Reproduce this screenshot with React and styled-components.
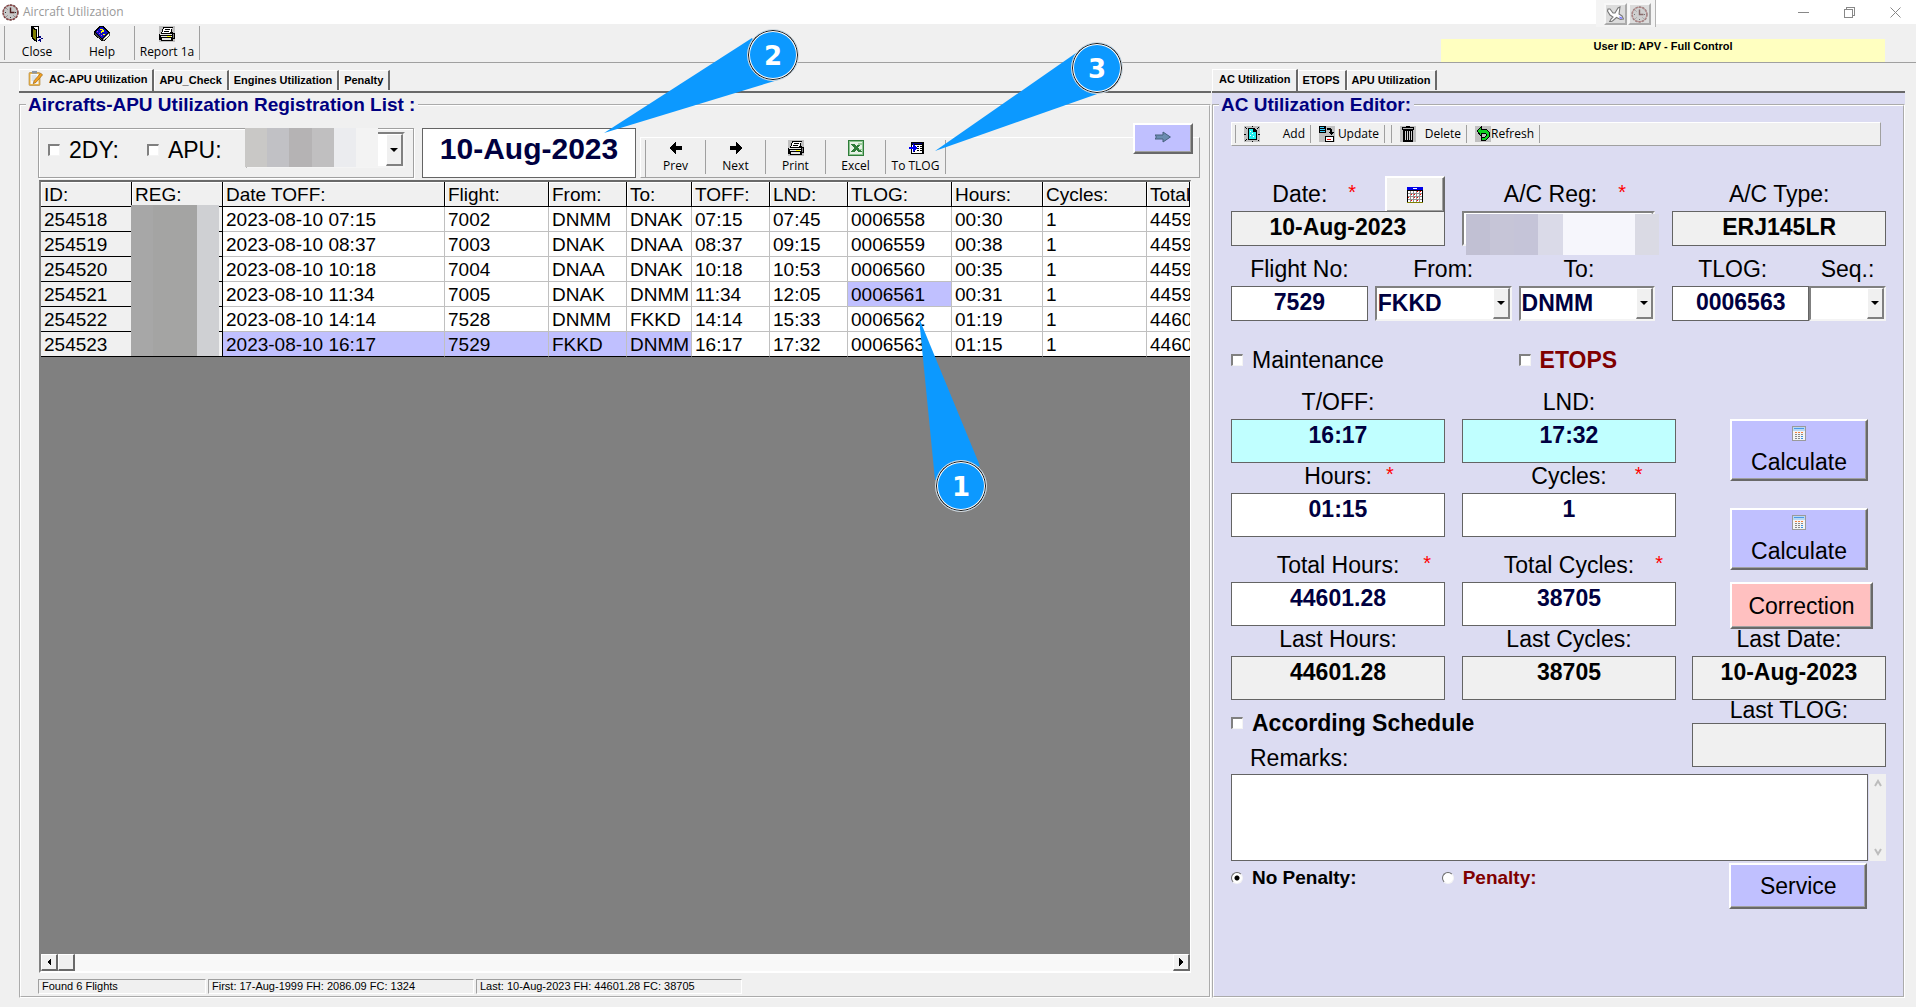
import React from "react";
import styled, { createGlobalStyle, css } from "styled-components";

const ARIAL = `"Liberation Sans", Arial, sans-serif`;
const UI = `"Open Sans", "Noto Sans", sans-serif`;

const GlobalStyle = createGlobalStyle`
  *, *::before, *::after { box-sizing: border-box; }
  body { margin: 0; background: #f0f0f0; color: #000; font-family: ${ARIAL}; }
  button, input, select, textarea { font: inherit; color: inherit; margin: 0; border-radius: 0; }
`;

const raised = css`
  border: 2px solid;
  border-color: #fff #696969 #696969 #fff;
  box-shadow: inset -1px -1px 0 #a0a0a0;
`;

const Shell = styled.div`
  position: relative;
  min-height: 100vh;
  display: flex;
  flex-direction: column;
  overflow: hidden;
`;

/* ---------- title bar ---------- */
const TitleBar = styled.header`
  height: 24px;
  display: flex;
  align-items: center;
  gap: 4px;
  padding-left: 2px;
  background: #fff;
  font: 12px/16px ${UI};
  color: #999;
`;
const Title = styled.h1`
  flex: 1;
  margin: 0;
  font: inherit;
`;
const WindowButtons = styled.div`
  display: flex;
  gap: 22px;
  padding-right: 9px;
`;
const WindowButton = styled.button`
  width: 24px;
  height: 20px;
  padding: 0;
  border: 0;
  background: none;
  display: grid;
  place-items: center;
`;
const FloatBar = styled.div`
  position: absolute;
  top: 0;
  right: 260px;
  width: 60px;
  height: 27px;
  display: flex;
  gap: 1px;
  padding: 3px 0 0 8px;
  background: #f4f4f4;
  border-right: 1px solid #b4b4b4;
`;
const FloatButton = styled.button`
  width: 23px;
  height: 22px;
  padding: 0;
  display: grid;
  place-items: center;
  background: #dcdcdc;
  border: 2px solid;
  border-color: #f8f8f8 #aaa #aaa #f8f8f8;
`;

/* ---------- main toolbar ---------- */
const TopBar = styled.div`
  height: 39px;
  display: flex;
  align-items: flex-start;
  justify-content: space-between;
  padding: 2px 31px 0 4px;
  border-bottom: 1px solid #a0a0a0;
`;
const Tools = styled.div`
  display: flex;
  border-left: 1px solid #a0a0a0;
`;
const ToolButton = styled.button`
  width: ${(p) => p.$w}px;
  height: 34px;
  padding: 0;
  display: flex;
  flex-direction: column;
  align-items: center;
  gap: 2px;
  background: none;
  border: 0;
  border-right: 1px solid #a0a0a0;
  font: 12px/16px ${UI};
  white-space: nowrap;
`;
const UserBadge = styled.div`
  width: 444px;
  height: 23px;
  margin-top: 13px;
  background: #ffffc0;
  font: bold 11px/14px ${ARIAL};
  text-align: center;
`;

/* ---------- pages ---------- */
const Pages = styled.main`
  flex: 1;
  display: grid;
  grid-template-columns: minmax(0, 1192fr) minmax(0, 693fr);
  gap: 1px;
  padding: 0 11px 9px 19px;
`;
const Page = styled.section`
  display: flex;
  flex-direction: column;
  min-width: 0;
`;
const TabStrip = styled.nav`
  height: 30px;
  display: flex;
  align-items: flex-end;
  border-bottom: 2px solid #696969;
`;
const Tab = styled.button`
  height: ${(p) => (p.$active ? 22 : 20)}px;
  margin-bottom: ${(p) => (p.$active ? 0 : 1)}px;
  padding: 0 5px ${(p) => (p.$active ? 4 : 2)}px ${(p) => p.$left || 4}px;
  display: flex;
  align-items: center;
  gap: 6px;
  background: #f0f0f0;
  border: solid;
  border-width: 1px 2px 0 1px;
  border-color: #fff #696969 #fff #fff;
  font: bold 11px/14px ${ARIAL};
  white-space: nowrap;
`;
const Group = styled.fieldset`
  flex: 1;
  min-width: 0;
  margin: 0;
  padding: ${(p) => p.$pad};
  display: flex;
  flex-direction: column;
  border: 2px groove #fff;
`;
const EditorBack = styled.div`
  flex: 1;
  display: flex;
  background: #dcdcf2;
`;
const Legend = styled.legend`
  margin-left: ${(p) => p.$left}px;
  padding: 0 3px 0 2px;
  font: bold 19px/24px ${ARIAL};
  color: #000080;
`;

/* ---------- list page ---------- */
const FilterRow = styled.div`
  position: relative;
  display: flex;
  align-items: flex-end;
  margin: 0 9px 2px 17px;
  height: 50px;
`;
const FilterBox = styled.div`
  width: 376px;
  height: 50px;
  display: flex;
  align-items: center;
  padding: 0 8px 6px 9px;
  border: 1px solid #a0a0a0;
  box-shadow: inset 1px 1px 0 #fff, 1px 1px 0 #fff;
`;
const Check = styled.label`
  display: flex;
  align-items: center;
  gap: 9px;
  margin-right: ${(p) => p.$mr || 0}px;
  font: ${(p) => (p.$bold ? "bold" : "normal")} ${(p) => p.$size || 23}px/26px ${ARIAL};
  color: ${(p) => p.$color || "#000"};
  white-space: nowrap;
`;
const Tick = styled.input`
  appearance: none;
  width: 12px;
  height: 12px;
  flex: none;
  background: #fff;
  border: solid;
  border-width: 2px 1px 1px 2px;
  border-color: #808080 #f4f4f4 #f4f4f4 #808080;
`;
const Dot = styled.input`
  appearance: none;
  width: 12px;
  height: 12px;
  flex: none;
  border-radius: 50%;
  border: 1px solid;
  border-color: #696969 #f4f4f4 #f4f4f4 #696969;
  background: #fff;
  &:checked { background: radial-gradient(circle, #000 2px, #fff 3px); }
`;
const Combo = styled.div`
  position: relative;
  display: flex;
  height: ${(p) => p.$h || 36}px;
  width: ${(p) => p.$w || "100%"};
  margin-left: ${(p) => (p.$push ? "auto" : 0)};
  background: #fff;
  border: 2px solid;
  border-color: #808080 #f4f4f4 #f4f4f4 #808080;
`;
const ComboSelect = styled.select`
  appearance: none;
  flex: 1;
  min-width: 0;
  padding: 0 0 2px 1px;
  border: 0;
  background: transparent;
  font: bold 23px/26px ${ARIAL};
  color: #000040;
`;
const ComboArrow = styled.span`
  width: 17px;
  display: grid;
  place-items: center;
  background: #f0f0f0;
  border: solid;
  border-width: 1px 2px 2px 1px;
  border-color: #fff #808080 #808080 #fff;
  pointer-events: none;
  &::after {
    content: "";
    border: 4px solid transparent;
    border-top-color: #000;
    border-bottom: 0;
  }
`;
const Mosaic = styled.div`
  position: absolute;
  top: ${(p) => p.$top}px;
  left: ${(p) => p.$left}px;
  width: ${(p) => p.$w}px;
  height: ${(p) => p.$h}px;
  display: flex;
`;
const Tile = styled.span`
  flex: ${(p) => p.$n || 1};
  background: ${(p) => p.$c};
`;
const DateBig = styled.input`
  width: 214px;
  height: 50px;
  margin: 0 4px 0 8px;
  padding: 0 0 8px;
  border: 1px solid #646464;
  background: #fff;
  font: bold 30px/36px ${ARIAL};
  color: #000040;
  text-align: center;
`;
const Strip = styled.div`
  flex: 1;
  height: 41px;
  padding: 2px 0 0 4px;
  display: flex;
  border: 1px solid;
  border-color: #fff #a0a0a0 #a0a0a0 #fff;
`;
const GoButton = styled.button`
  ${raised}
  position: absolute;
  right: 7px;
  bottom: 24px;
  width: 60px;
  height: 31px;
  padding: 0 0 4px;
  background: #c0c0ff;
  display: grid;
  place-items: center;
`;
const GridFrame = styled.div`
  position: relative;
  flex: 1;
  margin: 0 18px 6px 18px;
  display: flex;
  flex-direction: column;
  background: #808080;
  border: solid;
  border-width: 2px 1px 2px 2px;
  border-color: #696969 #fff #fff #808080;
  overflow: hidden;
`;
const GridBody = styled.div`
  flex: 1;
`;
const Flights = styled.table`
  width: 100%;
  table-layout: fixed;
  border-collapse: separate;
  border-spacing: 0;
  font: 19px/22px ${ARIAL};
`;
const Head = styled.th`
  height: 25px;
  padding: 2px 0 0 3px;
  font-weight: normal;
  text-align: left;
  background: #f0f0f0;
  border: solid #000;
  border-width: 0 1px 1px 0;
  box-shadow: inset 1px 1px 0 #fff;
  overflow: hidden;
  white-space: nowrap;
`;
const Cell = styled.td`
  height: 25px;
  padding: 2px 0 0 3px;
  overflow: hidden;
  white-space: nowrap;
  background: ${(p) => (p.$fixed ? "#f0f0f0" : p.$hot ? "#c0c0ff" : "#fff")};
  border: solid;
  border-color: ${(p) => (p.$fixed ? "#000" : "#c0c0c0")};
  border-width: 0 ${(p) => (p.$open ? 0 : 1)}px 1px 0;
  ${(p) => p.$last && "border-bottom-color: #000;"}
`;
const HScroll = styled.div`
  height: 17px;
  display: flex;
  background: #f8f8f8;
`;
const ScrollButton = styled.button`
  width: 17px;
  padding: 0;
  display: grid;
  place-items: center;
  background: #f0f0f0;
  border: solid;
  border-width: 1px 2px 2px 1px;
  border-color: #fff #696969 #696969 #fff;
  margin-left: ${(p) => (p.$end ? "auto" : 0)};
`;
const StatusBar = styled.footer`
  display: flex;
  gap: 2px;
  margin: 0 0 2px 17px;
`;
const Status = styled.div`
  width: ${(p) => p.$w}px;
  height: 15px;
  padding-left: 3px;
  border: 1px solid;
  border-color: #a0a0a0 #fff #fff #a0a0a0;
  font: 11px/13px ${ARIAL};
`;

/* ---------- editor page ---------- */
const EditorBar = styled.div`
  height: 24px;
  margin-right: 5px;
  margin-bottom: 30px;
  padding: 2px 0 2px 3px;
  display: flex;
  background: #f0f0f0;
  border: 1px solid;
  border-color: #fff #a0a0a0 #a0a0a0 #fff;
`;
const EditorButton = styled.button`
  width: ${(p) => p.$w}px;
  padding: 0 5px 0 8px;
  display: flex;
  align-items: center;
  justify-content: space-between;
  background: none;
  border: 0;
  border-left: 1px solid #a0a0a0;
  font: 12px/16px ${UI};
`;
const BarEnd = styled.span`
  border-left: 1px solid #a0a0a0;
  width: 7px;
`;
const Row = styled.div`
  display: grid;
  grid-template-columns: ${(p) => p.$cols};
  column-gap: ${(p) => p.$gap}px;
  margin-bottom: ${(p) => p.$mb || 0}px;
`;
const Field = styled.div`
  display: flex;
  flex-direction: column;
  min-width: 0;
`;
const FieldHead = styled.div`
  height: ${(p) => p.$h || 30}px;
  padding-right: ${(p) => (p.$lean ? 16 : 0)}px;
  display: flex;
  align-items: flex-end;
  gap: 16px;
`;
const Caption = styled.label`
  flex: 1;
  display: grid;
  grid-template-columns: 1fr auto 1fr;
  margin-bottom: ${(p) => (p.$tight ? 0 : 4)}px;
  font: 23px/26px ${ARIAL};
  white-space: nowrap;
  &::before { content: ""; }
`;
const Star = styled.span`
  padding-left: ${(p) => p.$gap}px;
  font: 20px/22px ${ARIAL};
  color: #f00;
`;
const Box = styled.input`
  width: 100%;
  height: ${(p) => (p.$tall ? 44 : 35)}px;
  padding: 0 0 ${(p) => (p.$tall ? 12 : 2)}px;
  border: 1px solid #646464;
  background: ${(p) => p.$bg || "#fff"};
  font: bold 23px/26px ${ARIAL};
  color: ${(p) => (p.readOnly ? "#000" : "#000040")};
  text-align: center;
`;
const CalendarButton = styled.button`
  ${raised}
  width: 60px;
  height: 35px;
  padding: 0;
  border-bottom: 0;
  background: #f0f0f0;
  display: grid;
  place-items: center;
`;
const TlogPair = styled.div`
  display: grid;
  grid-template-columns: 137fr 77fr;
  margin-left: 10px;
`;
const Actions = styled.div`
  display: flex;
  flex-direction: column;
  padding-top: 30px;
`;
const Action = styled.button`
  ${raised}
  width: ${(p) => p.$w || 138}px;
  height: ${(p) => p.$h}px;
  margin: 0 0 ${(p) => p.$mb || 0}px ${(p) => p.$ml || 0}px;
  padding: 0;
  display: flex;
  flex-direction: column;
  align-items: center;
  justify-content: center;
  gap: 8px;
  background: ${(p) => p.$bg || "#c0c0ff"};
  font: 23px/26px ${ARIAL};
`;
const RemarksLabel = styled.label`
  display: block;
  margin: 9px 0 3px 19px;
  font: 23px/26px ${ARIAL};
`;
const Memo = styled.div`
  display: flex;
  gap: 1px;
`;
const MemoText = styled.textarea`
  flex: 1;
  height: 87px;
  resize: none;
  overflow: hidden;
  border: 1px solid #646464;
  background: #fff;
`;
const MemoScroll = styled.div`
  width: 17px;
  padding: 5px 0;
  display: flex;
  flex-direction: column;
  align-items: center;
  justify-content: space-between;
  background: #f0f0f0;
`;
const Bottom = styled.div`
  display: grid;
  grid-template-columns: 211fr 288fr 157fr;
  align-items: start;
  padding-top: 2px;
  ${Check} { padding-top: 2px; }
`;

/* ---------- callouts ---------- */
const Tail = styled.svg`
  position: absolute;
  top: 0;
  left: 0;
  width: 1150px;
  height: 560px;
  pointer-events: none;
`;
const Bubble = styled.div`
  position: absolute;
  left: ${(p) => p.$x}px;
  top: ${(p) => p.$y}px;
  width: 52px;
  height: 52px;
  border: 1px solid #ddd;
  border-radius: 50%;
  background: #0c99ff;
  box-shadow: inset 0 0 0 1px #111, inset 0 0 0 2px #fff;
  color: #fff;
  font: bold 26px/52px "DejaVu Sans", Verdana, sans-serif;
  text-align: center;
`;

/* ---------- icons ---------- */
const Svg = ({ w = 16, h = 16, children }) => (
  <svg width={w} height={h} viewBox={`0 0 ${w} ${h}`} shapeRendering="crispEdges" aria-hidden="true">
    {children}
  </svg>
);
const ClockIcon = ({ pale }) => (
  <svg width="17" height="17" viewBox="0 0 17 17" aria-hidden="true" opacity={pale ? 0.6 : 1}>
    <circle cx="8.5" cy="8.5" r="7.4" fill="#c8c8c8" stroke="#5a4444" strokeWidth="1.6" strokeDasharray="2.4 1" />
    <circle cx="8.5" cy="8.5" r="7.4" fill="none" stroke="#b05050" strokeWidth=".7" />
    <path d="M8.5 3.5V8.5H12.5" fill="none" stroke="#502020" strokeWidth="1.4" />
    <path d="M3 8.5h1M8.5 13v1M13 8.5h1M4.6 4.6l.7.7M4.6 12.4l.7-.7M12.4 12.4l-.7-.7" stroke="#333" />
  </svg>
);
const PlaneIcon = () => (
  <svg width="17" height="16" viewBox="0 0 17 16" aria-hidden="true">
    <path d="M1 3h2l3 4 2 0 3-5 2-1-1 7 3 2 1.500 3-3 .5-4-2-4 3.500-3 1 1.500-3 2-2-3-2-2.500-4z" fill="#fff" stroke="#777" strokeWidth="1.1" />
    <path d="M12 10.500l2.500 .5 1 2-2.500-.5z" fill="#77f" />
  </svg>
);
const DoorIcon = () => (
  <Svg>
    <path d="M2 0h8v12H7V1H3v10H2z" fill="#000" />
    <path d="M3 1l4 3v11l-4-3z" fill="#808000" stroke="#000" strokeWidth="1" />
    <path d="M7 1h2v10H8V4z" fill="#fff" />
    <path d="M10 10h2v2h2v1h-2v3h-1v-2h-1v-1h2v-1h-2zM9 14h3v1H9z" fill="#000080" />
  </Svg>
);
const BookIcon = () => (
  <Svg>
    <path d="M6 0h3l7 6v3l-6 6H8L0 9V5z" fill="#000" />
    <path d="M6 1h2l6 5-6 6-7-6z" fill="#1010c0" />
    <path d="M1 7l7 6v1L1 9z" fill="#404040" />
    <path d="M9 13l6-6v3l-5 4H9z" fill="#fff" stroke="#777" strokeWidth=".6" />
    <path d="M6 3h3v1h1v2H8v1H7V5h1V4H6zM9 8h2v1H9z" fill="#ff0" />
    <path d="M3 5h1v1H3zM5 7h1v1H5zM7 9h1v1H7z" fill="#e040e0" />
  </Svg>
);
const PrinterIcon = () => (
  <Svg>
    <rect width="16" height="16" fill="#c0c0c0" />
    <path d="M4 1h10v1h-1v4h1v1h2v6h-2v2H2v-1H0V8h2V6h1V3h1z" fill="#000" />
    <path d="M5 2h8l-2 5H3z" fill="#fff" />
    <path d="M6 3h5v1H6zM5 5h5v1H5z" fill="#000" />
    <path d="M1 8h12v1H1zM2 10h11v1H2zM3 12h9v2H3z" fill="#e4e4e4" />
    <path d="M8 10h4v1H8z" fill="#ff0" />
    <path d="M14 8h1v4h-1z" fill="#808080" />
  </Svg>
);
const NoteIcon = () => (
  <svg width="15" height="15" viewBox="0 0 15 15" aria-hidden="true">
    <rect x="1" y="1.5" width="11" height="13" rx="1" fill="#e8b44c" stroke="#b08030" strokeWidth=".6" />
    <rect x="2.5" y="3" width="8" height="10" fill="#f6f8fb" />
    <rect x="4" y="0" width="5" height="2.6" fill="#8c96a4" />
    <path d="M3.5 5h5M3.5 7h5M3.5 9h3" stroke="#b8c4d4" strokeWidth=".8" />
    <path d="M12.6 2.2l2 1.6-6.6 7.6-2.8 1.4.8-3z" fill="#f4a020" stroke="#8a5a10" strokeWidth=".6" />
  </svg>
);
const ArrowIcon = ({ flip }) => (
  <Svg>
    <path
      transform={flip ? "matrix(-1 0 0 1 16 0)" : undefined}
      d="M2 6h6V2h1v1h1v1h1v1h1v1h1v1h1v2h-1v1h-1v1h-1v1h-1v1H9v1H8v-4H2z"
      fill="#000"
    />
  </Svg>
);
const GoIcon = () => (
  <svg width="16" height="12" viewBox="0 0 16 12" aria-hidden="true">
    <path d="M0 4h8V1l7.4 5L8 11V8H0l1.4-2z" fill="#6a8cb0" stroke="#46607c" strokeWidth="1" />
  </svg>
);
const ExcelIcon = () => (
  <Svg>
    <rect width="16" height="16" fill="#2f7d3a" />
    <rect x="1" y="1" width="14" height="14" fill="#8cc490" />
    <rect x="2" y="2" width="12" height="12" fill="#e6f2e6" />
    <path d="M3 4h4l1 2 2-2h3l-3 4 4 4h-4l-2-2-2 2H3l3-4z" fill="#2f7d3a" />
    <path d="M10 3h4v2h-4zM11 9h3v1h-3z" fill="#9ccc9c" />
  </Svg>
);
const TlogIcon = () => (
  <Svg>
    <path d="M3 2h13v12H3z" fill="#000" />
    <path d="M4 5h10v8H4z" fill="#fff" />
    <path d="M4 3h10v1H4z" fill="#000080" />
    <path d="M9 6h2v1H9zM12 6h2v1h-2zM9 8h2v1H9zM12 8h2v1h-2zM9 10h2v1H9zM12 10h2v1h-2zM5 11h2v1H5z" fill="#000" />
    <path d="M1 7h4V4h1v1h1v1h1v1h1v2H8v1H7v1H6v1H5V9H1z" fill="#0000f0" />
  </Svg>
);
const AddIcon = () => (
  <Svg>
    <rect width="16" height="16" fill="#c0c0c0" />
    <path d="M4 2h6l3 3v9H4z" fill="#000" />
    <path d="M5 3h4v3h3v7H5z" fill="#20f0f0" />
    <path d="M6 5h1v1H6zM8 7h1v1H8zM6 9h1v1H6zM9 10h1v1H9z" fill="#fff" />
    <path d="M1 1h1v1H1zM2 2h1v1H2zM14 1h1v1h-1zM13 2h1v1h-1zM0 8h2v1H0zM14 8h2v1h-2zM1 14h1v1H1zM2 13h1v1H2zM14 14h1v1h-1zM8 0h1v1H8zM8 15h1v1H8z" fill="#000" />
  </Svg>
);
const UpdateIcon = () => (
  <Svg>
    <rect width="16" height="16" fill="#c0c0c0" />
    <path d="M0 0h6l1 1v6H0z" fill="#000" />
    <path d="M1 1h4v1H1zM1 3h5v1H1zM1 5h5v1H1z" fill="#40d0ff" />
    <path d="M8 2h4v1h1v3h2l-3 3-3-3h2V4H8zM6 10h9v6H6z" fill="#000" />
    <path d="M7 11h7v4H7z" fill="#fff" />
    <path d="M8 13h4v1H8z" fill="#f00" />
  </Svg>
);
const TrashIcon = () => (
  <Svg>
    <rect width="16" height="16" fill="#c0c0c0" />
    <path d="M6 0h4v1h4v3h-1v12H3V4H2V1h4z" fill="#000" />
    <path d="M3 2h10v1H3z" fill="#b0b0b0" />
    <path d="M5 5h1v9H5zM7 5h1v9H7zM9 5h1v9H9zM11 5h1v9h-1z" fill="#d0d0d0" />
  </Svg>
);
const RefreshIcon = () => (
  <Svg>
    <rect width="16" height="16" fill="#c0c0c0" />
    <path d="M2 5l4-4v2h5l3 3v5l-3 3H6v-3h4l1-1V8l-1-1H6v3z" fill="#10d020" stroke="#000" strokeWidth="1" />
  </Svg>
);
const CalendarIcon = () => (
  <Svg>
    <rect width="16" height="16" fill="#000" />
    <rect width="16" height="3" fill="#0000e8" />
    <path d="M6 1h4v1H6z" fill="#fff" />
    <path d="M1 4h14v11H1z" fill="#fff" />
    <path d="M1 6h14v1H1zM1 9h14v1H1zM1 12h14v1H1zM3 4h1v11H3zM6 4h1v11H6zM9 4h1v11H9zM12 4h1v11h-1z" fill="#909090" />
    <path d="M10 4h1v1h-1zM13 4h1v1h-1zM4 7h1v1H4zM13 7h1v1h-1zM7 7h1v1H7zM1 10h1v1H1zM7 10h1v1H7zM10 10h1v1h-1zM4 13h1v1H4zM10 13h1v1h-1z" fill="#f00" />
    <path d="M0 15h16v1H0z" fill="#808000" />
  </Svg>
);
const CalcIcon = () => (
  <Svg w={14} h={15}>
    <rect width="14" height="15" fill="#9a9a9a" />
    <rect x="1" y="1" width="12" height="13" fill="#f4f4f4" />
    <rect x="1" y="1" width="12" height="4" fill="#b8d8f4" />
    <rect x="2" y="2" width="10" height="1" fill="#4a98e8" />
    {[6, 8, 10, 12].map((y) =>
      [3, 6, 9].map((x) => (
        <rect key={`${x}-${y}`} x={x} y={y} width="2" height="1" fill={y === 6 ? "#f08040" : x === 9 && y > 8 ? "#3a90e0" : "#888"} />
      ))
    )}
  </Svg>
);
const ScrollArrow = ({ right }) => (
  <Svg w={4} h={8}>
    <path d={right ? "M0 0l4 4-4 4z" : "M4 0L0 4l4 4z"} fill="#000" />
  </Svg>
);
const Chevron = ({ down }) => (
  <svg width="8" height="8" viewBox="0 0 8 8" aria-hidden="true">
    <path d={down ? "M1 1l3 5 3-5" : "M1 7l3-5 3 5"} fill="none" stroke="#bcbcbc" strokeWidth="2" />
  </svg>
);

/* ---------- data ---------- */
const columns = [
  ["ID:", 91], ["REG:", 91], ["Date TOFF:", 222], ["Flight:", 104], ["From:", 78], ["To:", 65],
  ["TOFF:", 78], ["LND:", 78], ["TLOG:", 104], ["Hours:", 91], ["Cycles:", 104], ["Total", null],
];
const flights = [
  ["254518", "", "2023-08-10 07:15", "7002", "DNMM", "DNAK", "07:15", "07:45", "0006558", "00:30", "1", "4459"],
  ["254519", "", "2023-08-10 08:37", "7003", "DNAK", "DNAA", "08:37", "09:15", "0006559", "00:38", "1", "4459"],
  ["254520", "", "2023-08-10 10:18", "7004", "DNAA", "DNAK", "10:18", "10:53", "0006560", "00:35", "1", "4459"],
  ["254521", "", "2023-08-10 11:34", "7005", "DNAK", "DNMM", "11:34", "12:05", "0006561", "00:31", "1", "4459"],
  ["254522", "", "2023-08-10 14:14", "7528", "DNMM", "FKKD", "14:14", "15:33", "0006562", "01:19", "1", "4460"],
  ["254523", "", "2023-08-10 16:17", "7529", "FKKD", "DNMM", "16:17", "17:32", "0006563", "01:15", "1", "4460"],
];
const isHot = (r, c) => (r === 5 && c >= 2 && c <= 5) || (r === 3 && c === 8);

const TextField = ({ id, label, value, star, tall, readOnly, bg, headH, tight, lean, extra }) => (
  <Field>
    <FieldHead $h={headH} $lean={lean}>
      <Caption htmlFor={id} $tight={tight}>
        <span>{label}</span>
        {star && <Star $gap={star}>*</Star>}
      </Caption>
      {extra}
    </FieldHead>
    <Box id={id} defaultValue={value} $tall={tall} readOnly={readOnly} $bg={readOnly ? "#f0f0f0" : bg} />
  </Field>
);

const ComboField = ({ id, label, value, star, headH, lean, children }) => (
  <Field>
    <FieldHead $h={headH} $lean={lean}>
      <Caption htmlFor={id}>
        <span>{label}</span>
        {star && <Star $gap={star}>*</Star>}
      </Caption>
    </FieldHead>
    <Combo $h={35}>
      <ComboSelect id={id} defaultValue={value}>
        <option value={value}>{value}</option>
      </ComboSelect>
      <ComboArrow />
      {children}
    </Combo>
  </Field>
);

export default function App() {
  return (
    <Shell>
      <GlobalStyle />
      <TitleBar>
        <ClockIcon />
        <Title>Aircraft Utilization</Title>
        <WindowButtons>
          <WindowButton aria-label="Minimize"><Svg w={11} h={11}><path d="M0 5h11v1H0z" fill="#888" /></Svg></WindowButton>
          <WindowButton aria-label="Restore">
            <Svg w={11} h={11}><path d="M.5 2.5h8v8h-8zM2.5 2.5v-2h8v8h-2" fill="none" stroke="#888" /></Svg>
          </WindowButton>
          <WindowButton aria-label="Close window">
            <svg width="11" height="11" viewBox="0 0 11 11"><path d="M.5 .5l10 10M10.5 .5l-10 10" stroke="#888" /></svg>
          </WindowButton>
        </WindowButtons>
        <FloatBar>
          <FloatButton aria-label="Aircraft"><PlaneIcon /></FloatButton>
          <FloatButton aria-label="Clock"><ClockIcon pale /></FloatButton>
        </FloatBar>
      </TitleBar>

      <TopBar>
        <Tools>
          <ToolButton $w={65}><DoorIcon />Close</ToolButton>
          <ToolButton $w={65}><BookIcon />Help</ToolButton>
          <ToolButton $w={65}><PrinterIcon />Report 1a</ToolButton>
        </Tools>
        <UserBadge>User ID: APV - Full Control</UserBadge>
      </TopBar>

      <Pages>
        <Page>
          <TabStrip>
            <Tab $active $left={8}><NoteIcon />AC-APU Utilization</Tab>
            <Tab>APU_Check</Tab>
            <Tab>Engines Utilization</Tab>
            <Tab>Penalty</Tab>
          </TabStrip>
          <Group $pad="11px 0 0">
            <Legend $left={5}>Aircrafts-APU Utilization Registration List :</Legend>
            <FilterRow>
              <FilterBox>
                <Check $mr={28}><Tick type="checkbox" />2DY:</Check>
                <Check><Tick type="checkbox" />APU:</Check>
                <Combo $push $w="159px">
                  <ComboSelect aria-label="APU" />
                  <ComboArrow />
                  <Mosaic $top={-6} $left={-3} $w={133} $h={39}>
                    <Tile $c="#c9c8c6" /><Tile $c="#c1c1c5" /><Tile $c="#b5b3b4" />
                    <Tile $c="#c0bfc0" /><Tile $c="#ebecef" /><Tile $c="#f3f3f3" />
                  </Mosaic>
                </Combo>
              </FilterBox>
              <DateBig aria-label="List date" defaultValue="10-Aug-2023" />
              <Strip>
                <Tools>
                  <ToolButton $w={60}><ArrowIcon flip />Prev</ToolButton>
                  <ToolButton $w={60}><ArrowIcon />Next</ToolButton>
                  <ToolButton $w={60}><PrinterIcon />Print</ToolButton>
                  <ToolButton $w={60}><ExcelIcon />Excel</ToolButton>
                  <ToolButton $w={60}><TlogIcon />To TLOG</ToolButton>
                </Tools>
              </Strip>
              <GoButton aria-label="Go"><GoIcon /></GoButton>
            </FilterRow>

            <GridFrame>
              <GridBody>
                <Flights>
                  <colgroup>
                    {columns.map(([name, w]) => <col key={name} width={w || undefined} />)}
                  </colgroup>
                  <thead>
                    <tr>{columns.map(([name]) => <Head key={name}>{name}</Head>)}</tr>
                  </thead>
                  <tbody>
                    {flights.map((row, r) => (
                      <tr key={row[0]}>
                        {row.map((v, c) => (
                          <Cell key={c} $fixed={c < 2} $hot={isHot(r, c)} $open={c === 11} $last={r === 5}>{v}</Cell>
                        ))}
                      </tr>
                    ))}
                  </tbody>
                </Flights>
              </GridBody>
              <Mosaic $top={23} $left={90} $w={88} $h={151}>
                <Tile $c="#a7a7a7" /><Tile $n={2} $c="#a4a4a3" /><Tile $c="#cfd0d3" />
              </Mosaic>
              <HScroll>
                <ScrollButton aria-label="Scroll left"><ScrollArrow /></ScrollButton>
                <ScrollButton aria-label="Scroll thumb" />
                <ScrollButton aria-label="Scroll right" $end><ScrollArrow right /></ScrollButton>
              </HScroll>
            </GridFrame>

            <StatusBar>
              <Status $w={168}>Found 6 Flights</Status>
              <Status $w={266}>First: 17-Aug-1999 FH: 2086.09 FC: 1324</Status>
              <Status $w={266}>Last: 10-Aug-2023 FH: 44601.28 FC: 38705</Status>
            </StatusBar>
          </Group>
        </Page>

        <Page>
          <TabStrip>
            <Tab $active $left={6}>AC Utilization</Tab>
            <Tab>ETOPS</Tab>
            <Tab>APU Utilization</Tab>
          </TabStrip>
          <EditorBack>
            <Group $pad="5px 17px 0">
              <Legend $left={-12}>AC Utilization Editor:</Legend>
              <EditorBar>
                <EditorButton $w={75}><AddIcon />Add</EditorButton>
                <EditorButton $w={74}><UpdateIcon />Update</EditorButton>
                <BarEnd />
                <EditorButton $w={75}><TrashIcon />Delete</EditorButton>
                <EditorButton $w={73}><RefreshIcon />Refresh</EditorButton>
                <BarEnd />
              </EditorBar>

              <Row $cols="214fr 194fr 214fr" $gap={17} $mb={10}>
                <TextField
                  id="date" label="Date:" value="10-Aug-2023" star={21} readOnly headH={35}
                  extra={<CalendarButton aria-label="Pick date"><CalendarIcon /></CalendarButton>}
                />
                <ComboField id="reg" label="A/C Reg:" value="" star={21} headH={35} lean>
                  <Mosaic $top={1} $left={2} $w={193} $h={41}>
                    <Tile $n={24} $c="#c1c0d3" /><Tile $n={24} $c="#c6c5d7" /><Tile $n={24} $c="#c5c4d8" />
                    <Tile $n={25} $c="#dadae8" /><Tile $n={72} $c="#f6f6fc" /><Tile $n={24} $c="#dadae4" />
                  </Mosaic>
                </ComboField>
                <TextField id="type" label="A/C Type:" value="ERJ145LR" readOnly headH={35} />
              </Row>

              <Row $cols="137fr 137fr 137fr 224fr" $gap={7} $mb={26}>
                <TextField id="flight" label="Flight No:" value="7529" />
                <ComboField id="from" label="From:" value="FKKD" />
                <ComboField id="to" label="To:" value="DNMM" lean />
                <TlogPair>
                  <TextField id="tlog" label="TLOG:" value="0006563" lean />
                  <ComboField id="seq" label="Seq.:" value="" />
                </TlogPair>
              </Row>

              <Row $cols="288fr 368fr" $gap={0} $mb={16}>
                <Check><Tick type="checkbox" />Maintenance</Check>
                <Check $bold $color="#800000"><Tick type="checkbox" />ETOPS</Check>
              </Row>

              <Row $cols="445fr 194fr" $gap={16}>
                <div>
                  <Row $cols="1fr 1fr" $gap={17}>
                    <TextField id="toff" label="T/OFF:" value="16:17" tall bg="#c0ffff" />
                    <TextField id="lnd" label="LND:" value="17:32" tall bg="#c0ffff" />
                  </Row>
                  <Row $cols="1fr 1fr" $gap={17} $mb={15}>
                    <TextField id="hours" label="Hours:" value="01:15" star={14} tall />
                    <TextField id="cycles" label="Cycles:" value="1" star={28} tall />
                  </Row>
                  <Row $cols="1fr 1fr" $gap={17}>
                    <TextField id="thours" label="Total Hours:" value="44601.28" star={24} tall />
                    <TextField id="tcycles" label="Total Cycles:" value="38705" star={21} tall />
                  </Row>
                  <Row $cols="1fr 1fr" $gap={17} $mb={10}>
                    <TextField id="lhours" label="Last Hours:" value="44601.28" tall readOnly />
                    <TextField id="lcycles" label="Last Cycles:" value="38705" tall readOnly />
                  </Row>
                  <Check $bold><Tick type="checkbox" />According Schedule</Check>
                  <RemarksLabel htmlFor="remarks">Remarks:</RemarksLabel>
                </div>
                <Actions>
                  <Action $h={62} $mb={27} $ml={38}><CalcIcon />Calculate</Action>
                  <Action $h={62} $mb={12} $ml={38}><CalcIcon />Calculate</Action>
                  <Action $h={47} $w={143} $ml={38} $bg="#ffc0c0">Correction</Action>
                  <TextField id="ldate" label="Last Date:" value="10-Aug-2023" tall readOnly headH={27} />
                  <TextField id="ltlog" label="Last TLOG:" value="" tall readOnly headH={23} tight />
                </Actions>
              </Row>

              <Memo>
                <MemoText id="remarks" />
                <MemoScroll><Chevron /><Chevron down /></MemoScroll>
              </Memo>

              <Bottom>
                <Check $bold $size={19}><Dot type="radio" name="penalty" defaultChecked />No Penalty:</Check>
                <Check $bold $size={19} $color="#800000"><Dot type="radio" name="penalty" />Penalty:</Check>
                <Action $h={46}>Service</Action>
              </Bottom>
            </Group>
          </EditorBack>
        </Page>
      </Pages>

      <Tail viewBox="0 0 1150 560" aria-hidden="true">
        <path d="M604 133L752 38L778 80Z" fill="#0c99ff" />
        <path d="M935 151L1076 53L1100 93Z" fill="#0c99ff" />
        <path d="M919 318L935 480L980 466Z" fill="#0c99ff" />
      </Tail>
      <Bubble $x={747} $y={29}>2</Bubble>
      <Bubble $x={1071} $y={42}>3</Bubble>
      <Bubble $x={935} $y={460}>1</Bubble>
    </Shell>
  );
}
